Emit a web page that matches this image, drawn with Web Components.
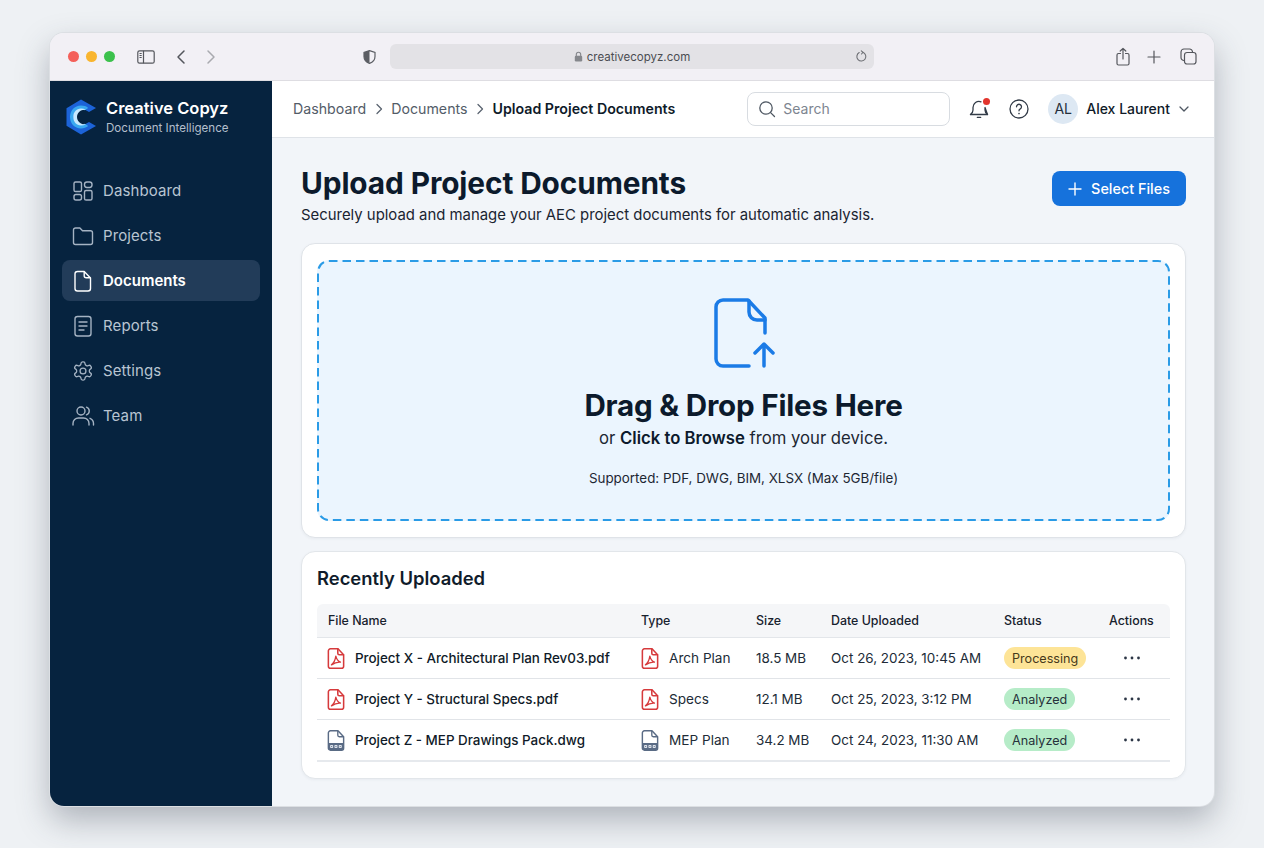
<!DOCTYPE html>
<html lang="en">
<head>
<meta charset="utf-8">
<title>Upload Project Documents</title>
<style>
  html, body { margin: 0; height: 100%; }
  body {
    background: #eef1f4;
    font-family: Inter, "Liberation Sans", sans-serif;
    overflow: hidden;
  }
</style>
</head>
<body>
<app-window>
  <browser-bar slot="bar" url="creativecopyz.com"></browser-bar>
  <side-nav slot="side"></side-nav>
  <top-bar slot="top"></top-bar>
  <page-header title="Upload Project Documents" sub="Securely upload and manage your AEC project documents for automatic analysis."></page-header>
  <drop-zone></drop-zone>
  <recent-table></recent-table>
</app-window>

<script>
const icons = {
  dashboard: '<rect x="3" y="3" width="7.500" height="9.500" rx="1.600"/><rect x="13.500" y="3" width="7.500" height="5.500" rx="2.400"/><rect x="3" y="15.500" width="7.500" height="5.500" rx="2"/><rect x="13.500" y="11.500" width="7.500" height="9.500" rx="1.600"/>',
  projects: '<path d="M2.500 6a2 2 0 0 1 2-2h4.400l2.600 2.800h8a2 2 0 0 1 2 2v9.700a2 2 0 0 1-2 2h-15a2 2 0 0 1-2-2z"/>',
  documents: '<path d="M6.500 2.500h6.700l6.300 6.500v10.500a2.500 2.500 0 0 1-2.500 2.500H6.500A2.500 2.500 0 0 1 4 19.500V5a2.500 2.500 0 0 1 2.500-2.500z"/><path d="M13.200 2.800v4a2 2 0 0 0 2 2h4"/>',
  reports: '<rect x="4" y="2.500" width="16" height="19.500" rx="2.500"/><path d="M8 8h8M8 12h8M8 16h5"/>',
  settings: '<g transform="translate(12 12) scale(.92) translate(-12 -12)"><path d="M12.220 2h-.44a2 2 0 0 0-2 2v.18a2 2 0 0 1-1 1.730l-.43.250a2 2 0 0 1-2 0l-.15-.08a2 2 0 0 0-2.730.730l-.22.380a2 2 0 0 0 .730 2.730l.15.100a2 2 0 0 1 1 1.720v.510a2 2 0 0 1-1 1.740l-.15.090a2 2 0 0 0-.730 2.730l.22.380a2 2 0 0 0 2.730.730l.15-.08a2 2 0 0 1 2 0l.43.250a2 2 0 0 1 1 1.730V20a2 2 0 0 0 2 2h.44a2 2 0 0 0 2-2v-.18a2 2 0 0 1 1-1.730l.43-.25a2 2 0 0 1 2 0l.15.080a2 2 0 0 0 2.730-.730l.22-.390a2 2 0 0 0-.730-2.730l-.15-.08a2 2 0 0 1-1-1.740v-.5a2 2 0 0 1 1-1.740l.15-.090a2 2 0 0 0 .730-2.730l-.22-.380a2 2 0 0 0-2.730-.730l-.15.080a2 2 0 0 1-2 0l-.43-.25a2 2 0 0 1-1-1.730V4a2 2 0 0 0-2-2z"/><circle cx="12" cy="12" r="3.200"/></g>',
  team: '<circle cx="10" cy="7" r="4"/><path d="M2 21v-1.500A5.500 5.500 0 0 1 7.500 14h5a5.500 5.500 0 0 1 5.500 5.500V21"/><path d="M15.500 3.200a4 4 0 0 1 0 7.600M19 14.300a5.500 5.500 0 0 1 3.500 5V21"/>'
};

function svg(name, size) {
  return `<svg width="${size}" height="${size}" viewBox="0 0 24 24" fill="none" stroke="currentColor" stroke-width="1.400" stroke-linecap="round" stroke-linejoin="round">${icons[name]}</svg>`;
}

class AppWindow extends HTMLElement {
  constructor() {
    super();
    this.attachShadow({ mode: 'open' });
    this.shadowRoot.innerHTML = `
      <style>
        :host {
          display: flex;
          flex-direction: column;
          box-sizing: border-box;
          width: 1164px;
          height: 773px;
          margin: 33px 0 0 50px;
          border-radius: 14px;
          overflow: hidden;
          background: #f2f5f9;
          box-shadow: 0 0 0 1px #dcdfe3, 0 14px 32px rgba(50, 60, 75, .34);
        }
        .body { flex: 1; display: flex; min-height: 0; }
        .main { flex: 1; display: flex; flex-direction: column; min-width: 0; }
        .content {
          flex: 1;
          padding: 28px 28px 0 29px;
          display: flex;
          flex-direction: column;
        }
      </style>
      <slot name="bar"></slot>
      <div class="body">
        <slot name="side"></slot>
        <div class="main">
          <slot name="top"></slot>
          <div class="content"><slot></slot></div>
        </div>
      </div>`;
  }
}

class BrowserBar extends HTMLElement {
  constructor() {
    super();
    this.attachShadow({ mode: 'open' });
    const url = this.getAttribute('url');
    this.shadowRoot.innerHTML = `
      <style>
        :host {
          display: flex;
          align-items: center;
          height: 48px;
          box-sizing: border-box;
          background: #f2f0f5;
          color: #54565c;
          border-bottom: 1px solid #dedde2;
          padding-left: 18px;
          flex: none;
        }
        .dots { display: flex; gap: 7px; }
        .dots i { width: 11px; height: 11px; border-radius: 50%; }
        svg { display: block; flex: none; }
        .side { margin-left: 22px; }
        .back { margin-left: 21px; }
        .fwd { margin-left: 20px; color: #a9aaaf; }
        .shield { margin-left: 147px; }
        .url {
          margin-left: 14px;
          width: 484px;
          height: 25px;
          border-radius: 6px;
          background: #e3e2e6;
          display: flex;
          align-items: center;
          justify-content: center;
          gap: 4px;
          position: relative;
          font-size: 11.500px;
          color: #4b4d52;
        }
        .url .lock { margin-top: -1px; }
        .url .reload { position: absolute; right: 6px; top: 6px; }
        .right { margin-left: auto; display: flex; align-items: center; gap: 17px; padding-right: 17px; }
      </style>
      <div class="dots">
        <i style="background:#f4605a"></i><i style="background:#f9b52f"></i><i style="background:#3cc14c"></i>
      </div>
      <svg class="side" width="18" height="14" viewBox="0 0 18 14" fill="none" stroke="currentColor" stroke-width="1.200">
        <rect x=".8" y=".8" width="16.400" height="12.400" rx="1.800"/><path d="M6.500 .8v12.400"/>
        <path d="M2.500 3.500h2.200M2.500 5.500h2.200M2.500 7.500h2.200" stroke-width="1"/>
      </svg>
      <svg class="back" width="10" height="16" viewBox="0 0 10 16" fill="none" stroke="currentColor" stroke-width="1.500" stroke-linecap="round" stroke-linejoin="round"><path d="M8 2 2 8l6 6"/></svg>
      <svg class="fwd" width="10" height="16" viewBox="0 0 10 16" fill="none" stroke="currentColor" stroke-width="1.500" stroke-linecap="round" stroke-linejoin="round"><path d="m2 2 6 6-6 6"/></svg>
      <svg class="shield" width="13" height="14" viewBox="0 0 13 14"><path d="M6.500 .6 12 2.400v4.200c0 3.400-2.300 5.700-5.500 6.800C3.300 12.300 1 10 1 6.600V2.400z" fill="none" stroke="#5c5e64" stroke-width="1.200"/><path d="M6.500 .6 1 2.400v4.200c0 3.400 2.300 5.700 5.500 6.800z" fill="#5c5e64"/></svg>
      <div class="url">
        <svg class="lock" width="9" height="11" viewBox="0 0 9 11"><path d="M2.300 5V3.400a2.200 2.200 0 0 1 4.400 0V5" fill="none" stroke="#85878c" stroke-width="1.100"/><rect x=".8" y="4.800" width="7.400" height="5.600" rx="1.200" fill="#85878c"/></svg>
        <span>${url}</span>
        <svg class="reload" width="13" height="13" viewBox="0 0 13 13" fill="none" stroke="#6d6f74" stroke-width="1.100" stroke-linecap="round"><path d="M7.800 2.300a4.500 4.500 0 1 1-3.600.3"/><path d="M6.300 .8 8 2.300 6.500 4"/></svg>
      </div>
      <div class="right">
        <svg width="14" height="19" viewBox="0 0 14 19" fill="none" stroke="currentColor" stroke-width="1.200" stroke-linecap="round" stroke-linejoin="round"><path d="M4.500 6.500H2.500A1.500 1.500 0 0 0 1 8v8.500A1.500 1.500 0 0 0 2.500 18h9a1.500 1.500 0 0 0 1.500-1.500V8a1.500 1.500 0 0 0-1.500-1.500h-2"/><path d="M7 12V1.500M4.200 4 7 1.500 9.800 4"/></svg>
        <svg width="14" height="14" viewBox="0 0 14 14" fill="none" stroke="currentColor" stroke-width="1.200" stroke-linecap="round"><path d="M7 1v12M1 7h12"/></svg>
        <svg style="margin-left:2px" width="17" height="17" viewBox="0 0 17 17" fill="none" stroke="currentColor" stroke-width="1.200"><rect x="4.500" y="4.500" width="11.500" height="11.500" rx="2.500"/><path d="M4.500 12.500h-.5A3 3 0 0 1 1 9.500V4a3 3 0 0 1 3-3h5.500a3 3 0 0 1 3 3v.5"/></svg>
      </div>`;
  }
}

class NavItem extends HTMLElement {
  constructor() {
    super();
    this.attachShadow({ mode: 'open' });
    this.shadowRoot.innerHTML = `
      <style>
        :host {
          display: flex;
          align-items: center;
          gap: 8px;
          height: 41px;
          margin: 0 12px;
          padding-left: 9px;
          border-radius: 8px;
          font-size: 15px;
          color: #b9c5d2;
          letter-spacing: .1px;
        }
        :host([active]) {
          background: #223c59;
          color: #fff;
          font-weight: 600;
          letter-spacing: 0;
        }
        svg { display: block; color: #a5b3c3; flex: none; }
        :host([active]) svg { color: #fff; }
      </style>
      ${svg(this.getAttribute('icon'), 24)}
      <slot></slot>`;
  }
}

class SideNav extends HTMLElement {
  constructor() {
    super();
    this.attachShadow({ mode: 'open' });
    this.shadowRoot.innerHTML = `
      <style>
        :host {
          display: flex;
          flex-direction: column;
          flex: none;
          width: 222px;
          height: 100%;
          background: #06233f;
          box-sizing: border-box;
        }
        .brand { display: flex; align-items: center; gap: 9px; padding: 0 0 0 16px; height: 72px; }
        .brand svg { display: block; flex: none; }
        .name { color: #fff; font-size: 16.500px; font-weight: 600; line-height: 20px; }
        .tag { color: #b3bfcc; font-size: 11.600px; line-height: 16px; margin-top: 2px; }
        nav { display: flex; flex-direction: column; gap: 4px; padding-top: 17px; }
      </style>
      <div class="brand">
        <svg width="31" height="36" viewBox="0 0 31 36">
          <path d="M15 .5 30 9l-7 4-8-4.400-7 4v10.800l7 4 8-4.400 7 4-15 8.500L.5 26.800V9.200z" fill="#1c63d8"/>
          <path d="M15 6.500c2.800 0 5.300.8 7.200 2.400l-3.300 2.300c-1.200-.7-2.500-1-3.900-1-4.400 0-7.300 3.300-7.300 7.800s2.900 7.800 7.300 7.800c1.400 0 2.700-.3 3.900-1l3.300 2.300c-1.900 1.600-4.400 2.400-7.200 2.400-6.400 0-11-5-11-11.500S8.600 6.500 15 6.500z" fill="#3aa9f0"/>
          <path d="M20 10.800c-1.500-.8-3.300-1.200-5-1.200-4.700 0-7.700 3.700-7.700 8.400s3 8.400 7.700 8.400c1.700 0 3.500-.4 5-1.200-1.700.2-3.600 0-5-.8-2.500-1.400-4-3.800-4-6.400s1.500-5 4-6.400c1.400-.8 3.300-1 5-.8z" fill="#c7e9ff"/>
        </svg>
        <div>
          <div class="name">Creative Copyz</div>
          <div class="tag">Document Intelligence</div>
        </div>
      </div>
      <nav>
        <nav-item icon="dashboard">Dashboard</nav-item>
        <nav-item icon="projects">Projects</nav-item>
        <nav-item icon="documents" active>Documents</nav-item>
        <nav-item icon="reports">Reports</nav-item>
        <nav-item icon="settings">Settings</nav-item>
        <nav-item icon="team">Team</nav-item>
      </nav>`;
  }
}

class TopBar extends HTMLElement {
  constructor() {
    super();
    this.attachShadow({ mode: 'open' });
    const chev = '<svg width="8" height="12" viewBox="0 0 8 12" fill="none" stroke="#5b6470" stroke-width="1.300" stroke-linecap="round" stroke-linejoin="round"><path d="m2 1.500 4.500 4.500L2 10.500"/></svg>';
    this.shadowRoot.innerHTML = `
      <style>
        :host {
          display: flex;
          align-items: center;
          flex: none;
          height: 57px;
          box-sizing: border-box;
          background: #fff;
          border-bottom: 1px solid #dfe3e8;
          padding: 0 0 1px 21px;
          font-size: 14.200px;
          color: #535c68;
        }
        .crumbs { display: flex; align-items: center; gap: 8.500px; }
        .crumbs b { color: #0e1a29; font-weight: 600; }
        svg { display: block; flex: none; }
        .search {
          margin-left: auto;
          width: 203px;
          height: 34px;
          box-sizing: border-box;
          border: 1px solid #d8dce1;
          border-radius: 8px;
          display: flex;
          align-items: center;
          gap: 7px;
          padding-left: 10px;
          color: #7d8590;
          font-size: 14px;
        }
        .bell { margin-left: 19px; position: relative; }
        .bell i { position: absolute; right: -1px; top: -1px; width: 7px; height: 7px; border-radius: 50%; background: #e2352d; }
        .help { margin-left: 20px; }
        .avatar {
          margin-left: 19px;
          width: 30px;
          height: 30px;
          border-radius: 50%;
          background: #dde8f3;
          color: #25303d;
          display: flex;
          align-items: center;
          justify-content: center;
          font-size: 14px;
        }
        .user { margin-left: 8px; color: #0f1a28; font-weight: 500; font-size: 14px; }
        .caret { margin-left: 9px; margin-right: 25px; }
      </style>
      <div class="crumbs">
        <span>Dashboard</span>${chev}<span>Documents</span>${chev}<b>Upload Project Documents</b>
      </div>
      <div class="search">
        <svg width="18" height="18" viewBox="0 0 18 18" fill="none" stroke="#4e5762" stroke-width="1.300" stroke-linecap="round"><circle cx="8" cy="8" r="6.200"/><path d="m12.600 12.600 3.900 3.900"/></svg>
        <span>Search</span>
      </div>
      <div class="bell">
        <svg width="20" height="20" viewBox="0 0 20 20" fill="none" stroke="#333c48" stroke-width="1.300" stroke-linecap="round" stroke-linejoin="round"><path d="M1.500 15.500c1.500-1 2.500-2.500 2.500-4.500V8.500a6 6 0 0 1 8-5.700M16 8.500V11c0 2 1 3.500 2.500 4.500z"/><path d="M1.500 15.500h17"/><path d="M8.300 18.300h3.400"/></svg>
        <i></i>
      </div>
      <svg class="help" width="20" height="20" viewBox="0 0 20 20" fill="none" stroke="#333c48" stroke-width="1.300" stroke-linecap="round"><circle cx="10" cy="10" r="9"/><path d="M7.500 7.800a2.500 2.500 0 1 1 3.800 2.100c-.9.500-1.300 1-1.300 1.900"/><path d="M10 14.500v.1" stroke-width="1.600"/></svg>
      <div class="avatar">AL</div>
      <span class="user">Alex Laurent</span>
      <svg class="caret" width="10" height="6" viewBox="0 0 10 6" fill="none" stroke="#4e5762" stroke-width="1.300" stroke-linecap="round" stroke-linejoin="round"><path d="m1 1 4 4 4-4"/></svg>`;
  }
}

class PageHeader extends HTMLElement {
  constructor() {
    super();
    this.attachShadow({ mode: 'open' });
    this.shadowRoot.innerHTML = `
      <style>
        :host { display: flex; justify-content: space-between; align-items: flex-start; flex: none; height: 77px; }
        h1 { margin: 0; font-size: 29.800px; line-height: 34px; font-weight: 700; color: #0c1a2c; letter-spacing: -.1px; }
        p { margin: 5px 0 0; font-size: 14.900px; line-height: 20px; color: #1a2431; }
        button {
          margin-top: 5px;
          width: 134px;
          height: 35px;
          border: none;
          border-radius: 8px;
          background: #1672dc;
          color: #fff;
          font: 500 14.400px Inter, "Liberation Sans", sans-serif;
          display: flex;
          align-items: center;
          justify-content: center;
          gap: 9px;
          padding: 0;
        }
      </style>
      <div>
        <h1>${this.getAttribute('title')}</h1>
        <p>${this.getAttribute('sub')}</p>
      </div>
      <button>
        <svg width="14" height="14" viewBox="0 0 14 14" fill="none" stroke="#fff" stroke-width="1.400" stroke-linecap="round"><path d="M7 1v12M1 7h12"/></svg>
        Select Files
      </button>`;
  }
}

class DropZone extends HTMLElement {
  constructor() {
    super();
    this.attachShadow({ mode: 'open' });
    this.shadowRoot.innerHTML = `
      <style>
        :host {
          display: block;
          flex: none;
          height: 295px;
          box-sizing: border-box;
          padding: 16px 15px;
          background: #fff;
          border: 1px solid #dfe3e8;
          border-radius: 14px;
          box-shadow: 0 1px 3px rgba(30, 50, 80, .05);
        }
        .area {
          position: relative;
          height: 100%;
          box-sizing: border-box;
          border-radius: 12px;
          background: #ebf5fe;
          display: flex;
          flex-direction: column;
          align-items: center;
          padding-top: 38px;
        }
        .dash { position: absolute; inset: 0; width: 100%; height: 100%; }
        .dash rect {
          x: 1px;
          y: 1px;
          width: calc(100% - 2px);
          height: calc(100% - 2px);
          rx: 11px;
          fill: none;
          stroke: #2a9be6;
          stroke-width: 2;
          stroke-dasharray: 8.500 5;
        }
        .up { display: block; margin-left: 5px; }
        h2 { margin: 16px 0 0; font-size: 29.600px; line-height: 38px; font-weight: 700; color: #0c1a2c; letter-spacing: -.2px; }
        .or { margin-top: 2px; font-size: 16.700px; line-height: 24px; color: #1d2733; }
        .or b { font-weight: 600; color: #0c1a2c; }
        .sup { margin-top: 18px; font-size: 13.400px; line-height: 20px; color: #1d2733; }
      </style>
      <div class="area">
        <svg class="dash"><rect/></svg>
        <svg class="up" width="64" height="72" viewBox="0 0 64 72" fill="none" stroke="#1b7be6" stroke-width="3.500" stroke-linecap="round" stroke-linejoin="round">
          <path d="M35 68H9a7 7 0 0 1-7-7V9a7 7 0 0 1 7-7h25l17 18v15"/>
          <path d="M35 3v11a8 8 0 0 0 8 8h8"/>
          <path d="M50 68V46M41 55l9-9 9 9"/>
        </svg>
        <h2>Drag &amp; Drop Files Here</h2>
        <div class="or">or <b>Click to Browse</b> from your device.</div>
        <div class="sup">Supported: PDF, DWG, BIM, XLSX (Max 5GB/file)</div>
      </div>`;
  }
}

class FileIcon extends HTMLElement {
  constructor() {
    super();
    this.attachShadow({ mode: 'open' });
    const kind = this.getAttribute('kind');
    const body = kind === 'pdf'
      ? `<g fill="none" stroke="#d63a3c" stroke-width="1.500" stroke-linejoin="round" stroke-linecap="round">
           <path d="M3.300 .8h7.400l5.500 5.700v11.200a2 2 0 0 1-2 2H3.300a2 2 0 0 1-2-2V2.800a2 2 0 0 1 2-2z"/>
           <path d="M10.500 1v4.200a1.400 1.400 0 0 0 1.400 1.400H16"/>
           <path d="M4.300 16.500c1.900-1.400 3.700-4.700 4.300-8.500.6 2.700 2 4.800 4.500 5.800-3-.4-6 .8-8.800 2.700z" stroke-width="1.300"/>
         </g>`
      : `<path d="M3.300 .8h7.400l5.500 5.700v11.200a2 2 0 0 1-2 2H3.300a2 2 0 0 1-2-2V2.800a2 2 0 0 1 2-2z" fill="#fff" stroke="#5a6b85" stroke-width="1.400" stroke-linejoin="round"/>
         <path d="M10.500 1v4.200a1.400 1.400 0 0 0 1.400 1.400H16" fill="none" stroke="#5a6b85" stroke-width="1.300"/>
         <path d="M1.300 12.800h14.900v4.900a2 2 0 0 1-2 2H3.300a2 2 0 0 1-2-2z" fill="#5a6b85"/>
         <g fill="#dfe4ec"><rect x="3" y="14.600" width="3" height="3" rx=".7"/><rect x="7.200" y="14.600" width="3" height="3" rx=".7"/><rect x="11.400" y="14.600" width="3" height="3" rx=".7"/></g>
         <g fill="#5a6b85"><circle cx="4.500" cy="16.100" r=".6"/><circle cx="8.700" cy="16.100" r=".6"/><circle cx="12.900" cy="16.100" r=".6"/></g>`;
    this.shadowRoot.innerHTML = `
      <style>:host { display: block; flex: none; width: 18px; height: 21px; } svg { display: block; }</style>
      <svg width="18" height="21" viewBox="0 0 17.500 20.500">${body}</svg>`;
  }
}

class StatusPill extends HTMLElement {
  constructor() {
    super();
    this.attachShadow({ mode: 'open' });
    this.shadowRoot.innerHTML = `
      <style>
        :host {
          display: inline-flex;
          align-items: center;
          height: 22px;
          padding: 0 8px;
          border-radius: 11px;
          font-size: 12.600px;
          color: #26323c;
          background: #b6ecc8;
        }
        :host([kind="processing"]) { background: #fde497; color: #46391a; }
      </style>
      <slot></slot>`;
  }
}

class FileRow extends HTMLElement {
  constructor() {
    super();
    this.attachShadow({ mode: 'open' });
    const a = n => this.getAttribute(n);
    const kind = a('kind');
    const st = a('status');
    this.shadowRoot.innerHTML = `
      <style>
        :host {
          display: grid;
          grid-template-columns: 314px 115px 75px 173px 105px 71px;
          align-items: center;
          height: 41px;
          border-bottom: 1px solid #e1e4e8;
          box-sizing: border-box;
          font-size: 13.450px;
          color: #212b37;
        }
        :host(:last-of-type) { height: 42px; border-bottom: 2px solid #e6e9ed; }
        div { padding-left: 10px; display: flex; align-items: center; gap: 10px; white-space: nowrap; }
        .name { font-weight: 500; color: #0f1a28; font-size: 13.400px; }
        .type { font-size: 13.600px; }
        .dots { width: 46px; justify-content: center; padding-left: 10px; }
        svg { display: block; }
      </style>
      <div class="name"><file-icon kind="${kind}"></file-icon>${a('name')}</div>
      <div class="type"><file-icon kind="${kind}"></file-icon>${a('type')}</div>
      <div>${a('size')}</div>
      <div>${a('date')}</div>
      <div><status-pill kind="${st.toLowerCase()}">${st}</status-pill></div>
      <div class="dots"><svg width="16" height="4" viewBox="0 0 16 4" fill="#2c3646"><circle cx="1.500" cy="2" r="1.400"/><circle cx="8" cy="2" r="1.400"/><circle cx="14.500" cy="2" r="1.400"/></svg></div>`;
  }
}

class RecentTable extends HTMLElement {
  constructor() {
    super();
    this.attachShadow({ mode: 'open' });
    this.shadowRoot.innerHTML = `
      <style>
        :host {
          display: block;
          flex: none;
          margin-top: 13px;
          height: 228px;
          box-sizing: border-box;
          padding: 13px 15px 0;
          background: #fff;
          border: 1px solid #e2e6ea;
          border-radius: 14px;
          box-shadow: 0 1px 3px rgba(30, 50, 80, .05);
        }
        h3 { margin: 0; font-size: 18.400px; line-height: 26px; font-weight: 600; color: #101c2b; }
        .head {
          margin-top: 13px;
          display: grid;
          grid-template-columns: 314px 115px 75px 173px 105px 71px;
          align-items: center;
          height: 34px;
          box-sizing: border-box;
          background: #f5f6f8;
          border-bottom: 1px solid #e3e6ea;
          border-radius: 6px 6px 0 0;
          font-size: 12.400px;
          font-weight: 500;
          color: #17212d;
        }
        .head span { padding-left: 10px; }
        .head span:first-child { padding-left: 11px; }
      </style>
      <h3>Recently Uploaded</h3>
      <div class="head">
        <span>File Name</span><span>Type</span><span>Size</span><span>Date Uploaded</span><span>Status</span><span>Actions</span>
      </div>
      <file-row kind="pdf" name="Project X - Architectural Plan Rev03.pdf" type="Arch Plan" size="18.5 MB" date="Oct 26, 2023, 10:45 AM" status="Processing"></file-row>
      <file-row kind="pdf" name="Project Y - Structural Specs.pdf" type="Specs" size="12.1 MB" date="Oct 25, 2023, 3:12 PM" status="Analyzed"></file-row>
      <file-row kind="dwg" name="Project Z - MEP Drawings Pack.dwg" type="MEP Plan" size="34.2 MB" date="Oct 24, 2023, 11:30 AM" status="Analyzed"></file-row>`;
  }
}

customElements.define('file-icon', FileIcon);
customElements.define('status-pill', StatusPill);
customElements.define('file-row', FileRow);
customElements.define('nav-item', NavItem);
customElements.define('browser-bar', BrowserBar);
customElements.define('side-nav', SideNav);
customElements.define('top-bar', TopBar);
customElements.define('page-header', PageHeader);
customElements.define('drop-zone', DropZone);
customElements.define('recent-table', RecentTable);
customElements.define('app-window', AppWindow);
</script>
</body>
</html>
